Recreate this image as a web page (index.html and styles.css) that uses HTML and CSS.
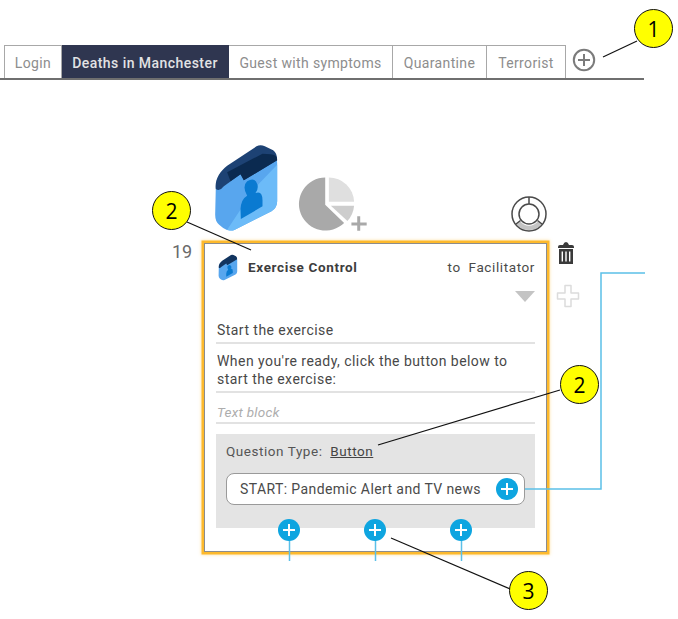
FILE: index.html
```html
<!DOCTYPE html>
<html lang="en">
<head>
<meta charset="utf-8">
<title>Exercise flow</title>
<link rel="stylesheet" href="styles.css">
</head>
<body>
<main class="board">
  <nav class="tabs">
    <a class="tab">Login</a>
    <a class="tab tab-active">Deaths in Manchester</a>
    <a class="tab tab-guest">Guest with symptoms</a>
    <a class="tab tab-quarantine">Quarantine</a>
    <a class="tab tab-terrorist">Terrorist</a>
    <svg class="tab-add" viewBox="0 0 24 24"><circle cx="12" cy="12" r="10.2"/><path d="M12 6v12M6 12h12"/></svg>
  </nav>

  <svg class="icon-folder" viewBox="220 40 200 270">
    <path fill="#58a6ee" d="M228 170C228 150 240 130 258 118L360 58Q412 60 412 100V215Q412 235 395 245L285 300Q268 307 250 295L238 285Q226 275 226 255Z"/>
    <path fill="#6cbbf8" d="M412 105V215Q412 235 395 245L285 300Q275 305 262 300L345 175Z"/>
    <path fill="#0a7ad1" d="M303 268L302 238Q304 208 322 198Q306 170 322 155Q345 140 353 165Q356 180 347 190Q368 182 368 212V230Z"/>
    <path fill="#1d4274" d="M228 178C224 150 240 125 262 108L350 50Q362 44 375 50L400 62Q412 70 412 92L312 152L302 134L252 170Q240 186 228 178Z"/>
    <path fill="#0b2a50" d="M412 92L312 152L302 134L272 155L262 128L368 72L392 74Q412 74 412 92Z"/>
  </svg>

  <svg class="icon-pie" viewBox="470 130 220 180">
    <path fill="#a9a9a9" d="M555 143V225L612 280A80 80 0 1 1 555 143Z"/>
    <path fill="#dfdfdf" d="M566 143A76 76 0 0 1 642 216H566Z"/>
    <path fill="#cdcdcd" d="M572 228H642A78 78 0 0 1 622 274Z"/>
    <path fill="none" stroke="#a9a9a9" stroke-width="9" d="M656 260V304M634 283H680"/>
  </svg>

  <svg class="icon-ring" viewBox="0 0 36 36">
    <path class="ring-shade" d="M9 25A11 11 0 0 0 27 25L31 28A17 17 0 0 1 5 28Z"/>
    <circle cx="18" cy="18" r="17"/><circle cx="18" cy="18" r="10"/>
    <path d="M18 1V8M9.500 24.500L5 28M26.500 24.500L31 28"/>
  </svg>

  <svg class="icon-trash" viewBox="0 0 16 22">
    <path class="trash-lid" d="M0 5Q0 3 2 3H5Q6 0 8 0T11 3H14Q16 3 16 5V6H0Z"/>
    <path class="trash-can" d="M1 7H15V22H1ZM3.600 9.500V19.500H5V9.500ZM7.300 9.500V19.500H8.700V9.500ZM11 9.500V19.500H12.400V9.500Z"/>
  </svg>

  <svg class="icon-ghost-plus" viewBox="0 0 24 24">
    <path d="M9 1.500H15V9H22.500V15H15V22.500H9V15H1.500V9H9Z"/>
  </svg>

  <span class="row-number">19</span>

  <article class="card">
    <header class="card-head">
      <svg class="card-icon" viewBox="220 40 200 270">
        <path fill="#58a6ee" d="M228 170C228 150 240 130 258 118L360 58Q412 60 412 100V215Q412 235 395 245L285 300Q268 307 250 295L238 285Q226 275 226 255Z"/>
        <path fill="#0a7ad1" d="M303 268L302 238Q304 208 322 198Q306 170 322 155Q345 140 353 165Q356 180 347 190Q368 182 368 212V230Z"/>
        <path fill="#12345f" d="M228 178C224 150 240 125 262 108L350 50Q362 44 375 50L400 62Q412 70 412 92L312 152L302 134L252 170Q240 186 228 178Z"/>
      </svg>
      <strong class="card-title">Exercise Control</strong>
      <span class="card-to">to&nbsp; Facilitator</span>
    </header>
    <div class="card-toggle"><span class="triangle"></span></div>
    <p class="field field-title">Start the exercise</p>
    <p class="field field-body">When you're ready, click the button below to start the exercise:</p>
    <p class="field field-hint">Text block</p>
    <section class="question">
      <p class="question-type">Question Type:&nbsp; <u>Button</u></p>
      <div class="answer">
        <span>START: Pandemic Alert and TV news</span>
        <span class="port"></span>
      </div>
    </section>
  </article>

  <svg class="overlay" viewBox="0 0 678 619">
    <g class="wires">
      <path d="M525 489H601V273H645"/>
      <path d="M289.500 535V561M375.500 535V561M461.500 535V561"/>
    </g>
    <g class="leaders">
      <path d="M603 57L637 41"/>
      <path d="M187 222L251 250"/>
      <path d="M560 390L378 445"/>
      <path d="M391 538L510 589"/>
    </g>
  </svg>

  <span class="port port-a"></span>
  <span class="port port-b"></span>
  <span class="port port-c"></span>

  <span class="callout callout-1">1</span>
  <span class="callout callout-2a">2</span>
  <span class="callout callout-2b">2</span>
  <span class="callout callout-3">3</span>
</main>
</body>
</html>
```

FILE: styles.css
```css
* { box-sizing: border-box; }
html, body { margin: 0; background: #fff; }
.board {
  position: relative;
  width: 678px;
  height: 619px;
  overflow: hidden;
  font-family: Roboto, "Liberation Sans", sans-serif;
  color: #444;
}

/* tabs */
.tabs {
  display: flex;
  align-items: stretch;
  width: 644px;
  height: 35px;
  margin: 0;
  position: relative;
  top: 45px;
  padding-left: 4px;
  border-bottom: 2px solid #6f6f6f;
}
.tab {
  display: flex;
  align-items: center;
  justify-content: center;
  width: 58px;
  padding-top: 2px;
  border: 1px solid #a8a8a8;
  border-bottom: 0;
  border-left-width: 0;
  font-size: 14px;
  letter-spacing: .35px;
  color: #8d8d8d;
}
.tab:first-child { border-left-width: 1px; }
.tab-active {
  width: 167px;
  background: #2f3650;
  border-color: #2f3650;
  color: #e2e2e4;
  font-weight: 500;
  letter-spacing: .45px;
}
.tab-guest { width: 164px; }
.tab-quarantine { width: 94px; }
.tab-terrorist { width: 79px; }
.tab-add {
  width: 24px;
  height: 24px;
  margin: 3px 0 0 6px;
  fill: none;
  stroke: #7b7b7b;
  stroke-width: 2;
}

/* free canvas items */
.icon-folder { position: absolute; left: 213px; top: 143px; width: 67px; height: 90px; }
.icon-pie { position: absolute; left: 297px; top: 173px; width: 73px; height: 60px; }
.icon-ring {
  position: absolute; left: 511px; top: 196px; width: 36px; height: 36px;
  fill: none; stroke: #4a4a4a; stroke-width: 1.500;
}
.ring-shade { fill: #c4c4c4; stroke: none; }
.icon-trash { position: absolute; left: 558px; top: 242px; width: 16px; height: 22px; }
.trash-lid, .trash-can { fill: #3a3a3a; fill-rule: evenodd; }
.icon-ghost-plus {
  position: absolute; left: 556px; top: 284px; width: 24px; height: 24px;
  fill: #fff; stroke: #dcdcdc; stroke-width: 1.500; stroke-linejoin: round;
}
.row-number { position: absolute; left: 172px; top: 240px; font-size: 18px; line-height: 24px; color: #6a6a6a; }

/* card */
.card {
  position: absolute;
  left: 204px;
  top: 243px;
  width: 343px;
  height: 309px;
  padding: 0 11px;
  background: #fff;
  border: 1px solid #8c8c8c;
  box-shadow: 0 0 0 2.500px #fdb92c, 0 0 3px 3px rgba(253, 185, 44, .35);
}
.card-head { display: flex; align-items: center; height: 46px; margin-left: 2px; }
.card-icon { width: 20px; height: 27px; flex: none; margin-right: 10px; }
.card-title { font-size: 13.500px; font-weight: 700; color: #3d3d3d; letter-spacing: .65px; }
.card-to { margin-left: auto; font-size: 13.500px; letter-spacing: .6px; color: #4a4a4a; }
.card-toggle { display: flex; justify-content: flex-end; height: 27px; padding-top: 1px; }
.triangle {
  width: 0; height: 0;
  border-left: 10px solid transparent;
  border-right: 10px solid transparent;
  border-top: 11px solid #c4c4c4;
}
.field {
  margin: 0;
  border-bottom: 2px solid #e2e2e2;
  font-size: 14px;
  line-height: 18px;
  letter-spacing: .45px;
  color: #484848;
  padding-left: 1px;
}
.field-title { padding-top: 4px; padding-bottom: 3px; }
.field-body { padding-top: 8px; padding-bottom: 3px; }
.field-hint { padding-top: 10px; padding-bottom: 1px; font-style: italic; color: #adadad; font-size: 13.500px; letter-spacing: .3px; }
.question { height: 94px; margin-top: 10px; padding: 8px 10px 0; background: #e4e4e4; }
.question-type { margin: 0; font-size: 13.500px; line-height: 18px; letter-spacing: .55px; color: #555; }
.question-type u { color: #444; }
.answer {
  display: flex;
  align-items: center;
  justify-content: space-between;
  width: 299px;
  height: 32px;
  margin-top: 13px;
  padding: 0 6px 0 13px;
  background: #fff;
  border: 1px solid #9a9a9a;
  border-radius: 8px;
  font-size: 14px;
  letter-spacing: .4px;
  color: #4a4a4a;
}

/* blue + ports */
.port {
  position: relative;
  flex: none;
  display: block;
  width: 22px;
  height: 22px;
  border-radius: 50%;
  background: #0ea5e0;
}
.port::before, .port::after {
  content: "";
  position: absolute;
  background: #fff;
  left: 5px; top: 10px; width: 12px; height: 2px;
}
.port::after { left: 10px; top: 5px; width: 2px; height: 12px; }
.port-a, .port-b, .port-c { position: absolute; top: 519px; }
.port-a { left: 278px; }
.port-b { left: 364px; }
.port-c { left: 450px; }

/* connectors and leader lines */
.overlay { position: absolute; left: 0; top: 0; width: 678px; height: 619px; fill: none; pointer-events: none; }
.wires { stroke: #5bc0e8; stroke-width: 1.500; }
.leaders { stroke: #111; stroke-width: 1.200; }

/* numbered callouts */
.callout {
  position: absolute;
  display: flex;
  align-items: center;
  justify-content: center;
  width: 39px;
  height: 39px;
  border: 1.500px solid #111;
  border-radius: 50%;
  background: #ffff00;
  font-family: "Open Sans", "Liberation Sans", sans-serif;
  font-size: 21px;
  color: #000;
}
.callout-1 { left: 634px; top: 9px; }
.callout-2a { left: 152px; top: 191px; }
.callout-2b { left: 560px; top: 365px; }
.callout-3 { left: 509px; top: 571px; }
```
